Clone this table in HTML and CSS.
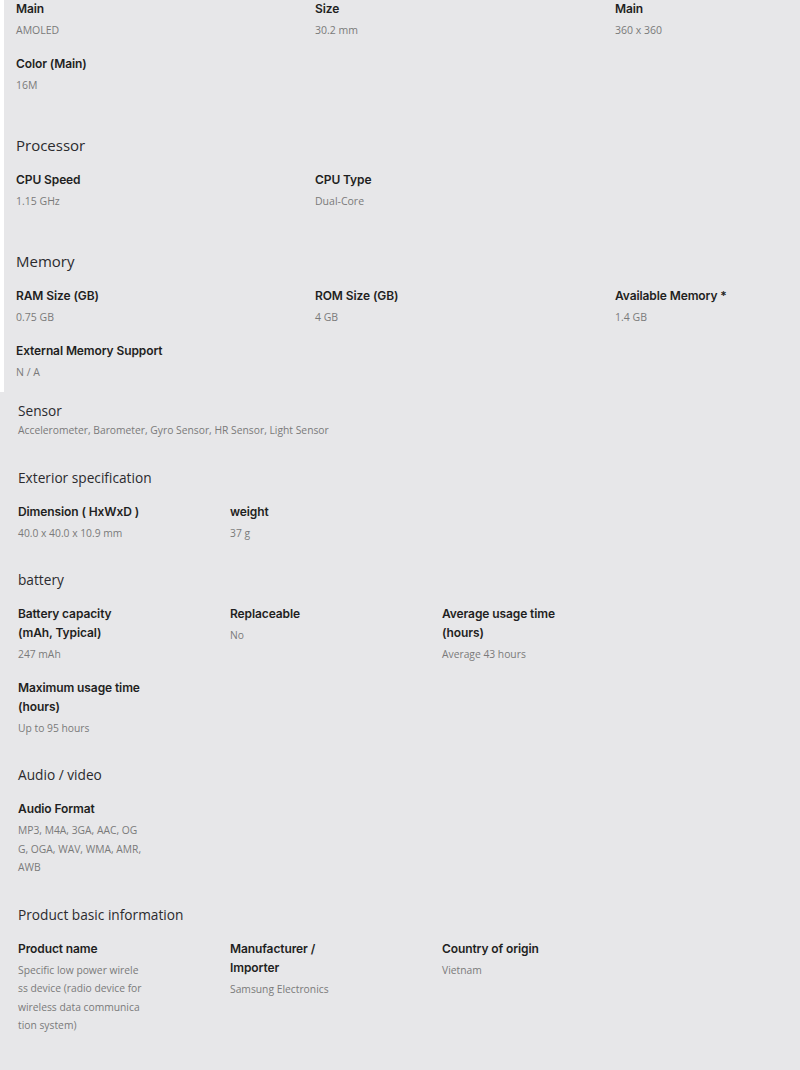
FILE: index.html
```html
<!DOCTYPE html>
<html>
<head>
<meta charset="utf-8">
<link rel="stylesheet" href="styles.css">
</head>
<body>
<div class="top">
  <div class="grid g3 first">
    <div class="item"><div class="label">Main</div><div class="value">AMOLED</div></div>
    <div class="item"><div class="label">Size</div><div class="value">30.2 mm</div></div>
    <div class="item"><div class="label">Main</div><div class="value">360 x 360</div></div>
    <div class="item"><div class="label">Color (Main)</div><div class="value">16M</div></div>
  </div>
  <h2 class="heading">Processor</h2>
  <div class="grid g3">
    <div class="item"><div class="label">CPU Speed</div><div class="value">1.15 GHz</div></div>
    <div class="item"><div class="label">CPU Type</div><div class="value">Dual-Core</div></div>
  </div>
  <h2 class="heading">Memory</h2>
  <div class="grid g3">
    <div class="item"><div class="label">RAM Size (GB)</div><div class="value">0.75 GB</div></div>
    <div class="item"><div class="label">ROM Size (GB)</div><div class="value">4 GB</div></div>
    <div class="item"><div class="label">Available Memory *</div><div class="value">1.4 GB</div></div>
    <div class="item"><div class="label">External Memory Support</div><div class="value">N / A</div></div>
  </div>
</div>
<div class="bottom">
  <h2 class="bheading sensor">Sensor</h2>
  <div class="bvalue wide">Accelerometer, Barometer, Gyro Sensor, HR Sensor, Light Sensor</div>

  <h2 class="bheading">Exterior specification</h2>
  <div class="bgrid">
    <div class="bitem"><div class="blabel">Dimension ( HxWxD )</div><div class="bvalue">40.0 x 40.0 x 10.9 mm</div></div>
    <div class="bitem"><div class="blabel">weight</div><div class="bvalue">37 g</div></div>
  </div>

  <h2 class="bheading">battery</h2>
  <div class="bgrid">
    <div class="bitem"><div class="blabel">Battery capacity (mAh, Typical)</div><div class="bvalue">247 mAh</div></div>
    <div class="bitem"><div class="blabel">Replaceable</div><div class="bvalue">No</div></div>
    <div class="bitem"><div class="blabel">Average usage time (hours)</div><div class="bvalue">Average 43 hours</div></div>
    <div class="bitem"><div class="blabel">Maximum usage time (hours)</div><div class="bvalue">Up to 95 hours</div></div>
  </div>

  <h2 class="bheading">Audio / video</h2>
  <div class="bgrid">
    <div class="bitem"><div class="blabel">Audio Format</div><div class="bvalue">MP3, M4A, 3GA, AAC, OGG, OGA, WAV, WMA, AMR, AWB</div></div>
  </div>

  <h2 class="bheading">Product basic information</h2>
  <div class="bgrid">
    <div class="bitem"><div class="blabel">Product name</div><div class="bvalue">Specific low power wireless device (radio device for wireless data communication system)</div></div>
    <div class="bitem"><div class="blabel">Manufacturer / Importer</div><div class="bvalue">Samsung Electronics</div></div>
    <div class="bitem"><div class="blabel">Country of origin</div><div class="bvalue">Vietnam</div></div>
  </div>
</div>
</body>
</html>
```

FILE: styles.css
```css
html, body {
  margin: 0;
  padding: 0;
  background: #e7e7e9;
}
body {
  font-family: "Open Sans", "Noto Sans", sans-serif;
  color: #222;
}
.top {
  border-left: 4px solid #ffffff;
  padding: 1px 0 12px 12px;
}
.grid {
  display: grid;
  grid-template-columns: 299px 300px 180px;
  row-gap: 18px;
}
.label {
  font-family: "Inter", "Lato", sans-serif;
  font-weight: 600;
  font-size: 12px;
  line-height: 16px;
  letter-spacing: -0.1px;
  color: #1f1f22;
}
.value {
  font-size: 10.5px;
  line-height: 16px;
  margin-top: 5px;
  color: #7a7a7a;
}
.heading {
  margin: 42px 0 17px 0;
  font-size: 15px;
  line-height: 20px;
  font-weight: 500;
  color: #2b2b2e;
}
.bottom {
  padding: 0 0 30px 18px;
}
.bheading {
  margin: 28px 0 14px 0;
  font-size: 13.7px;
  line-height: 20px;
  font-weight: 500;
  color: #2b2b2e;
}
.bheading.sensor {
  margin: 9px 0 0 0;
}
.bgrid {
  display: grid;
  grid-template-columns: repeat(3, 212px);
  row-gap: 14px;
}
.bitem {
  width: 124px;
}
.blabel {
  font-family: "Inter", "Lato", sans-serif;
  font-weight: 600;
  font-size: 12px;
  line-height: 19px;
  letter-spacing: -0.1px;
  color: #1f1f22;
}
.bvalue {
  font-size: 10.3px;
  line-height: 18.5px;
  margin-top: 3px;
  color: #7a7a7a;
  word-break: break-all;
}
.bvalue.wide {
  margin-top: 0;
  word-break: normal;
}
```
